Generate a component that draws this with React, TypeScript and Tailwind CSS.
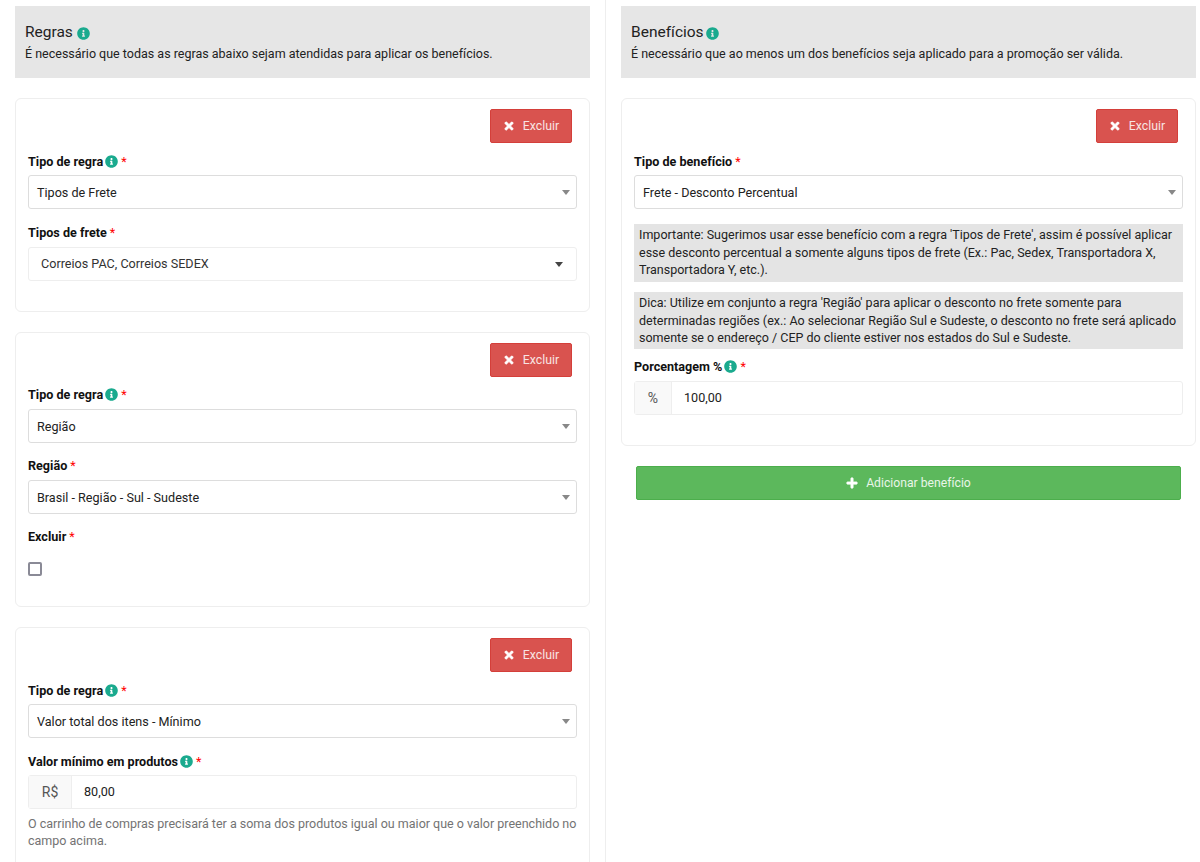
import React from "react";
import { FaInfoCircle, FaPlus, FaTimes } from "react-icons/fa";

function Info() {
  return <FaInfoCircle className="inline-block w-[13px] h-[13px] text-[#1aaa8e] shrink-0" />;
}

function Label({ text, info, className = "" }: { text: string; info?: boolean; className?: string }) {
  return (
    <div className={"flex items-center h-[17px] text-[12.6px] font-bold text-[#111] " + className}>
      <span className="pt-[2px]">{text}</span>
      {info && <span className="ml-[2px] flex"><Info /></span>}
      <span className="ml-[3px] pt-[1px] text-[#f00] font-normal">*</span>
    </div>
  );
}

function Arrow({ dark }: { dark?: boolean }) {
  return (
    <span
      className={
        "w-0 h-0 border-l-[4px] border-r-[4px] border-t-[5px] border-l-transparent border-r-transparent " +
        (dark ? "border-t-[#444]" : "border-t-[#888]")
      }
    />
  );
}

function Select({ value, className = "" }: { value: string; className?: string }) {
  return (
    <div className={"flex items-center justify-between h-[34px] pl-[8px] pr-[6px] bg-white border border-[#ddd] rounded-[3px] text-[12.6px] text-[#222] " + className}>
      <span className="pt-[2px]">{value}</span>
      <Arrow />
    </div>
  );
}

function DeleteRow() {
  return (
    <div className="flex justify-end pr-[5px]">
      <button className="flex items-center justify-center w-[82px] h-[34px] bg-[#d9534f] border border-[#d43f3a] rounded-[2px] text-[#f8e4e3] text-[12.3px]">
        <FaTimes className="w-[12px] h-[12px] mr-[8px] text-white stroke-current stroke-[30]" />
        Excluir
      </button>
    </div>
  );
}

function AddonInput({ addon, value, wide }: { addon: string; value: string; wide?: boolean }) {
  return (
    <div className="flex h-[34px] border border-[#eee] rounded-[3px] text-[12.6px] bg-white">
      <div className={"flex items-center justify-center bg-[#f9f9f9] border-r border-[#eee] text-[#555] text-[14px] " + (wide ? "w-[43px]" : "w-[37px]")}>
        {addon}
      </div>
      <div className="flex items-center pl-[12px] text-[#222]">{value}</div>
    </div>
  );
}

const cardClass = "border border-[#eee] rounded-[6px] bg-white pt-[10px] px-[12px]";

export default function App() {
  return (
    <div className="h-[862px] w-[1200px] overflow-hidden bg-white flex font-['Roboto',Arial,sans-serif]">
      <div className="w-[605px] h-full pl-[15px] pr-[15px] pt-[6px] shrink-0">
        <div className="w-[575px] h-[72px] bg-[#e6e6e6] pl-[10px] pt-[18px]">
          <div className="flex items-center h-[18px] text-[15.5px] text-[#222]">
            Regras<span className="ml-[4px] flex"><Info /></span>
          </div>
          <p className="mt-[3px] text-[12.5px] leading-[17px] text-[#222]">
            É necessário que todas as regras abaixo sejam atendidas para aplicar os benefícios.
          </p>
        </div>

        <div className={cardClass + " mt-[20px] w-[575px] h-[214px]"}>
          <DeleteRow />
          <Label text="Tipo de regra" info className="mt-[10px]" />
          <Select value="Tipos de Frete" className="mt-[5px]" />
          <Label text="Tipos de frete" className="mt-[15px]" />
          <div className="mt-[6px] flex items-center justify-between h-[34px] pl-[12px] pr-[13px] border border-[#eee] rounded-[3px] text-[12.6px] text-[#333]">
            <span>Correios PAC, Correios SEDEX</span>
            <Arrow dark />
          </div>
        </div>

        <div className={cardClass + " mt-[20px] w-[575px] h-[275px]"}>
          <DeleteRow />
          <Label text="Tipo de regra" info className="mt-[9px]" />
          <Select value="Região" className="mt-[6px]" />
          <Label text="Região" className="mt-[14px]" />
          <Select value="Brasil - Região - Sul - Sudeste" className="mt-[6px]" />
          <Label text="Excluir" className="mt-[14px]" />
          <div className="mt-[17px] w-[14px] h-[14px] border-2 border-[#8a8a96] rounded-[2px] bg-white" />
        </div>

        <div className={cardClass + " mt-[20px] w-[575px] h-[300px]"}>
          <DeleteRow />
          <Label text="Tipo de regra" info className="mt-[10px]" />
          <Select value="Valor total dos itens - Mínimo" className="mt-[5px]" />
          <Label text="Valor mínimo em produtos" info className="mt-[15px]" />
          <div className="mt-[5px]"><AddonInput addon="R$" value="80,00" wide /></div>
          <p className="mt-[6px] text-[12.5px] leading-[17px] text-[#737373]">
            O carrinho de compras precisará ter a soma dos produtos igual ou maior que o valor preenchido no campo acima.
          </p>
        </div>
      </div>

      <div className="w-[595px] h-full border-l border-[#eee] pl-[15px] pt-[6px] shrink-0">
        <div className="w-[575px] h-[72px] bg-[#e6e6e6] pl-[10px] pt-[18px]">
          <div className="flex items-center h-[18px] text-[15.5px] text-[#222]">
            Benefícios<span className="ml-[2px] flex"><Info /></span>
          </div>
          <p className="mt-[3px] text-[12.5px] leading-[17px] text-[#222]">
            É necessário que ao menos um dos benefícios seja aplicado para a promoção ser válida.
          </p>
        </div>

        <div className={cardClass + " mt-[20px] w-[575px] h-[348px]"}>
          <DeleteRow />
          <Label text="Tipo de benefício" className="mt-[10px]" />
          <Select value="Frete - Desconto Percentual" className="mt-[5px]" />
          <div className="mt-[15px] h-[58px] bg-[#e4e4e4] px-[5px] pt-[2px] text-[12.5px] leading-[17.5px] text-[#222]">
            Importante: Sugerimos usar esse benefício com a regra 'Tipos de Frete', assim é possível aplicar esse desconto percentual a somente alguns tipos de frete (Ex.: Pac, Sedex, Transportadora X, Transportadora Y, etc.).
          </div>
          <div className="mt-[10px] h-[57px] bg-[#e4e4e4] px-[5px] pt-[2px] text-[12.5px] leading-[17.5px] text-[#222]">
            Dica: Utilize em conjunto a regra 'Região' para aplicar o desconto no frete somente para determinadas regiões (ex.: Ao selecionar Região Sul e Sudeste, o desconto no frete será aplicado somente se o endereço / CEP do cliente estiver nos estados do Sul e Sudeste.
          </div>
          <Label text="Porcentagem %" info className="mt-[9px]" />
          <div className="mt-[6px]"><AddonInput addon="%" value="100,00" /></div>
        </div>

        <button className="mt-[20px] ml-[15px] w-[545px] h-[34px] flex items-center justify-center bg-[#5cb85c] border border-[#4cae4c] rounded-[2px] text-[#e8f5e8] text-[12.2px]">
          <FaPlus className="w-[12px] h-[12px] mr-[8px] text-white stroke-current stroke-[30]" />
          Adicionar benefício
        </button>
      </div>
    </div>
  );
}
